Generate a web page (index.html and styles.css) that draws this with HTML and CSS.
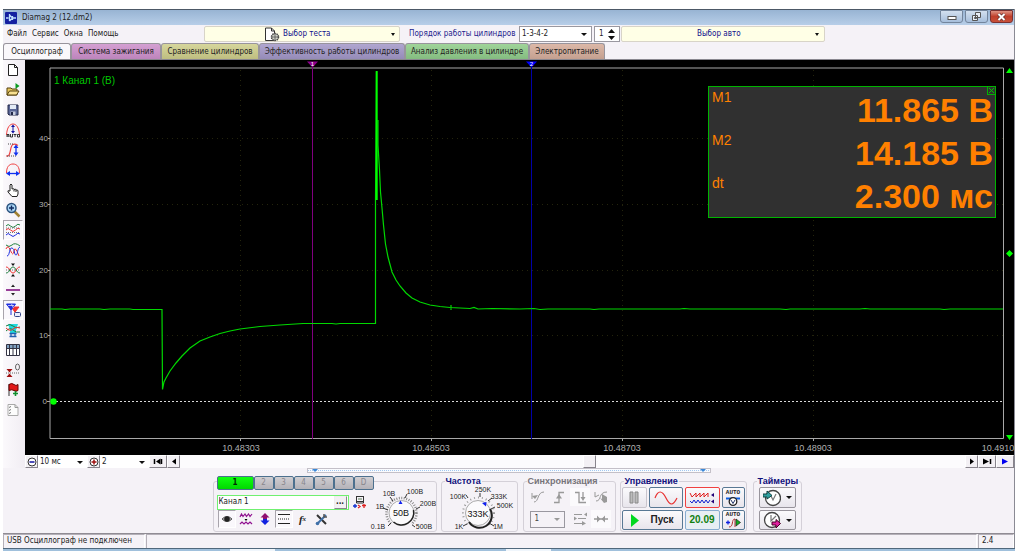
FILE: index.html
```
<!DOCTYPE html>
<html lang="ru">
<head>
<meta charset="utf-8">
<title>Diamag 2 (12.dm2)</title>
<link rel="stylesheet" href="styles.css">
</head>
<body>
<div class="window">
  <header class="titlebar">
    <svg class="app-logo" width="12" height="12" viewBox="0 0 12 12"><rect width="12" height="12" rx="1" fill="#1420a0"/><path d="M1 6h2.500M4.500 2v7M4.500 3l3 3-3 3M7.500 4v4M7.500 6H11" fill="none" stroke="#bfe0ff" stroke-width="1.300"/></svg>
    <h1>Diamag 2 (12.dm2)</h1>
    <div class="win-buttons">
      <button class="win-btn" aria-label="Свернуть"><svg width="10" height="8"><rect x="1" y="3.500" width="8" height="3" fill="#fff" stroke="#555"/></svg></button>
      <button class="win-btn" aria-label="Восстановить"><svg width="10" height="9"><path d="M3.500 .500h5v5h-5zM.500 3.500h5v5h-5z" fill="#e8eef6" stroke="#555"/><path d="M2.500 5.500h2v1h-2z" fill="none" stroke="#555"/></svg></button>
      <button class="win-btn close" aria-label="Закрыть"><svg width="9" height="8"><path d="M1.500 1l6 6M7.500 1l-6 6" stroke="#5a2a2a" stroke-width="3.400"/><path d="M1.500 1l6 6M7.500 1l-6 6" stroke="#fff" stroke-width="2"/></svg></button>
    </div>
  </header>

  <div class="menubar">
    <nav class="menu"><button>Файл</button><button>Сервис</button><button>Окна</button><button>Помощь</button></nav>
    <button class="chooser test">
      <svg width="16" height="15" viewBox="0 0 16 15"><path d="M1.500 1h6l3 3v9.500h-9z" fill="#fff" stroke="#333"/><path d="M7.500 1v3h3" fill="none" stroke="#333"/><circle cx="11" cy="10" r="3.500" fill="#cfd3c8" stroke="#444" stroke-width="1.500" stroke-dasharray="1.500 .700"/><path d="M7.500 10h7M11 6.500v7" stroke="#555" stroke-width=".800"/></svg>
      <span>Выбор теста</span><i class="caret"></i>
    </button>
    <label class="order-label" for="order">Порядок работы цилиндров</label>
    <span class="drop order"><select id="order"><option>1-3-4-2</option></select></span>
    <span class="spin"><input aria-label="Цилиндр" value="1"><svg width="7" height="11"><path d="M3.500 0L7 4H0zM3.500 11L0 7h7z" fill="#111"/></svg></span>
    <button class="chooser auto"><span>Выбор авто</span><i class="caret"></i></button>
  </div>

  <div class="tabs" role="tablist">
    <button role="tab" aria-selected="true" class="tab active">Осциллограф</button>
    <button role="tab" class="tab pink">Система зажигания</button>
    <button role="tab" class="tab olive">Сравнение цилиндров</button>
    <button role="tab" class="tab violet">Эффективность работы цилиндров</button>
    <button role="tab" class="tab green">Анализ давления в цилиндре</button>
    <button role="tab" class="tab peach">Электропитание</button>
  </div>

  <main class="work">
    <aside class="tools">
      <button aria-label="Новый"><svg viewBox="0 0 16 16"><path d="M3.500 2.500h6l3 3v8h-9z" fill="#fff" stroke="#222"/><path d="M9.500 2.500v3h3" fill="none" stroke="#222"/></svg></button>
      <button aria-label="Открыть"><svg viewBox="0 0 16 16"><path d="M2 6h4l1 1h5v6H2z" fill="#e8c860" stroke="#55400c"/><path d="M2 13l2.500-4H14l-2.500 4z" fill="#f8e090" stroke="#55400c"/><path d="M10.500 1l4 3-4 3z" fill="#0a9a20"/></svg></button>
      <button aria-label="Сохранить"><svg viewBox="0 0 16 16"><path d="M3 3h10v10H4l-1-1z" fill="#5a6696" stroke="#222848"/><path d="M5 3h6v4H5z" fill="#e4ebf6"/><path d="M5.500 9.500h5V13h-5z" fill="#c8cede"/><path d="M6 10h2v3H6z" fill="#222848"/></svg></button>
      <button aria-label="Авто масштаб"><svg viewBox="0 0 16 16"><path d="M1.500 13C2 5 5 2 8 2s6 3 6.500 11" fill="none" stroke="#f04040"/><path d="M8 4v6" stroke="#1010a0"/><path d="M8 2.500l2 2.500H6zM8 11.500L6 9h4z" fill="#1010a0"/><path d="M2 15v-2.500h2V15M2 14h2M5.500 12v3h2v-3M8.500 12.500h3M10 12.500V15M12.500 12.500h2V15h-2z" fill="none" stroke="#222" stroke-width=".900"/></svg></button>
      <button aria-label="Амплитуда"><svg viewBox="0 0 16 16"><path d="M1 14h2C6 13 5 3 8 2.500q2-1 5 1" fill="none" stroke="#f04040" stroke-width="1.200"/><path d="M3 2h5M2 14h9" stroke="#444" stroke-dasharray="1 1"/><path d="M11 4v8" stroke="#1030f0" stroke-width="1.300"/><path d="M11 2.500l2.500 3.500h-5zM11 14l-2.500-3.500h5z" fill="#1030f0"/></svg></button>
      <button aria-label="Длительность"><svg viewBox="0 0 16 16"><path d="M1.500 11C1.500 5 4 2 8 2s6.500 3 6.500 9" fill="none" stroke="#f04040"/><path d="M3 11.500h10" stroke="#1030f0" stroke-width="1.300"/><path d="M1 11.500L5 9v5zM15 11.500L11 9v5z" fill="#1030f0"/></svg></button>
      <button aria-label="Рука"><svg viewBox="0 0 16 16"><path d="M5 9V3q1-2 2 0v4q2-1 2 .500 2-1 2 .500 2-.500 2 1v3l-1 2.500H7L3 10q-1-2 2-1z" fill="#fff" stroke="#222"/><path d="M9 7.500v2M11 8v2" stroke="#222"/></svg></button>
      <button aria-label="Масштаб"><svg viewBox="0 0 16 16"><path d="M9.500 9.500l5 5" stroke="#a08030" stroke-width="2.500"/><circle cx="6.500" cy="6" r="4.500" fill="#a8d4f4" stroke="#28507c" stroke-width="1.500"/><path d="M4 6h5M6.500 3.500v5" stroke="#112a60" stroke-width="1.400"/></svg></button>
      <button class="pressed" aria-label="Раздельно"><svg viewBox="0 0 16 16"><g fill="none"><path d="M1 4q2-3 4.500 0t5 0 4.500-1" stroke="#208040"/><path d="M1 8q2-3 4.500 0t5 0 4.500-1" stroke="#f03030"/><path d="M1 13q2-3 4.500 0t5 0 4.500-1" stroke="#2030e0"/><path d="M1 6h14M1 10.500h14" stroke="#777" stroke-dasharray="1 1"/></g></svg></button>
      <button aria-label="Совместно"><svg viewBox="0 0 16 16"><g fill="none"><path d="M1 3q3 3 6 0t8 1" stroke="#208040"/><path d="M1 7q2-5 4.500 1.500T9 9t5 5" stroke="#f03030"/><path d="M2 14c3 0 2-9 5-8s2 7 4 7 1-7 4-8" stroke="#2030e0"/></g></svg></button>
      <button aria-label="Центр"><svg viewBox="0 0 16 16"><path d="M1 8h14" stroke="#777" stroke-dasharray="1 1"/><path d="M1 5c4 0 4 6 7 6s3-6 7-6" fill="none" stroke="#f03030"/><path d="M1 11c4 0 4-6 7-6s3 6 7 6" fill="none" stroke="#208040"/><path d="M8 4L6 1.500h4zM8 12l2 2.500H6z" fill="#111"/></svg></button>
      <button aria-label="Разделитель"><svg viewBox="0 0 16 16"><path d="M1 8h14" stroke="#801080" stroke-width="1.600"/><path d="M8 2.500L10 5H6zM8 13.500L6 11h4z" fill="#222"/></svg></button>
      <button class="pressed" aria-label="Линейки"><svg viewBox="0 0 16 16"><path d="M6 5h8l-4 5zM10 5v8" fill="#f03030" stroke="#f03030"/><path d="M1.500 2h9L6 8zM6 2v11" fill="#2030e0" stroke="#2030e0"/><path d="M3 3.500h6M6.500 2l2 4" stroke="#dde" stroke-width=".800"/><rect x="9.500" y="10.500" width="6" height="4" rx="1" fill="#e8ecff" stroke="#334488"/></svg></button>
      <button aria-label="Фильтр"><svg viewBox="0 0 16 16"><path d="M3 2h10l-2 6v3H5V8z" fill="#20d8e0"/><path d="M4.500 11.500h7M4.500 14.500h7M6 11v3M10 11v3" stroke="#2060b0" stroke-width="1.300"/><path d="M1 4q4-3 7 0t7 1M1 9q4-4 7-1t7 2" fill="none" stroke="#208040"/><path d="M1 6q4 4 7 1t7-1" fill="none" stroke="#f03030"/></svg></button>
      <button aria-label="Таблица"><svg viewBox="0 0 16 16"><path d="M1.500 2.500h13v11h-13z" fill="#fff" stroke="#334"/><path d="M2 3h12v3H2z" fill="#80a0c0"/><path d="M2 6.500h12M4.500 3v10M8 3v10M11.500 3v10" stroke="#334"/></svg></button>
      <button aria-label="Ноль"><svg viewBox="0 0 16 16"><path d="M1 11h14" stroke="#666" stroke-dasharray="1 1"/><path d="M4.500 10.500L1.500 7h6zM4.500 11.500l3 3.500h-6z" fill="#a01010"/><ellipse cx="12.500" cy="5" rx="2" ry="3" fill="none" stroke="#666"/></svg></button>
      <button aria-label="Метка"><svg viewBox="0 0 16 16"><path d="M4 2v12" stroke="#333"/><path d="M4 2.500q3-2 5 0t4 0v6q-2 1.500-4 0t-5 0z" fill="#e01818" stroke="#600"/><path d="M10.500 9v5M8 11.500h5" stroke="#109030" stroke-width="1.600"/></svg></button>
      <button aria-label="Отчёт"><svg viewBox="0 0 16 16"><path d="M3 2.500h7l3 3v8H3z" fill="#fcfcfc" stroke="#aaa"/><path d="M10 2.500v3h3" fill="none" stroke="#999"/><path d="M4 5.500l2-1M4 8.500l2-1M4 11.500l2-1" stroke="#777"/></svg></button>
    </aside>

    <section class="scope">
      <div class="plot">
        <svg class="graph" viewBox="25 60 989 395" role="img" aria-label="Осциллограмма, канал 1">
          <g class="grid-lines">
            <path d="M52 138.500H1003M52 204.500H1003M52 270.500H1003M52 335.500H1003M240.500 70V438M431.500 70V438M622.500 70V438M813.500 70V438"/>
          </g>
          <path class="zero" d="M52 401.500H1003"/>
          <path class="frame" d="M50 68H1003.500V438.500H50z"/>
          <path class="frame" d="M48 138.500h2M48 204.500h2M48 270.500h2M48 335.500h2M47 401.500h3M240.500 439v2M431.500 439v2M622.500 439v2M813.500 439v2"/>
          <g class="y-labels"><text x="48" y="141">40</text><text x="48" y="207">30</text><text x="48" y="273">20</text><text x="48" y="338">10</text><text x="47" y="404">0</text></g>
          <g class="x-labels"><text x="241" y="451">10.48303</text><text x="431" y="451">10.48503</text><text x="622" y="451">10.48703</text><text x="813" y="451">10.48903</text><text x="998" y="451">10.4910</text></g>
          <path d="M312.500 64V439" stroke="#80007f"/><path d="M307 61.500h11l-5.500 6z" fill="#90008f"/>
          <path d="M531.500 64V439" stroke="#0000a8"/><path d="M526 61.500h11l-5.500 6z" fill="#0000ff"/>
          <g class="marks"><text x="312.500" y="66">1</text><text x="531.500" y="66">2</text></g>
          <path class="trace" d="M50 309h12l3 .500 5-.500h30l4 .500 6-.500h20l3 .500h29L162.500 389.500L164 382L166 378L170 371L176 363L182 356L190 348L200 341L210 337L220 333.500L230 331L240 329L260 326.500L280 325L303 323.500H332L336 324L340 323.500H375.500V200L376.500 72"/>
          <path class="trace" d="M378 120V145L379.500 170L380.500 192L382 208L383.500 225L385.500 244L388 257L392 272L396 280L400 286L406 293L412 298L420 302L430 305L440 306.500L450 307.500L470 308.500L474 307.500L478 309L492 308.500L520 309L534 308.500L540 309.500L548 309H590L594 309.500L599 309H680L684 308.500L690 309H780L786 309.500L790 309H860L865 308.500L870 309H940L944 309.500L950 309H1003M451 305v5"/>
          <path d="M376.700 71V200" stroke="#00ff00" stroke-width="2"/>
          <text class="channel" x="54" y="84">1 Канал 1 (В)</text>
          <circle cx="53.500" cy="401.500" r="3.200" fill="#00ff00"/>
          <path d="M1009.500 68l3.500 5h-7zM1009.500 440l-3.500-5h7zM1009.500 250l3.500 3.500-3.500 3.500-3.500-3.500z" fill="#00ff00"/>
        </svg>
        <div class="readout">
          <button class="readout-close" aria-label="Закрыть"><svg width="7" height="7"><path d="M1 1l5 5M6 1L1 6" stroke="#00c800"/></svg></button>
          <div class="reading"><span>M1</span><output>11.865 В</output></div>
          <div class="reading"><span>M2</span><output>14.185 В</output></div>
          <div class="reading"><span>dt</span><output>2.300 мс</output></div>
        </div>
      </div>
      <div class="timebar">
        <button class="tb" aria-label="Уменьшить"><svg width="10" height="10"><circle cx="5" cy="5" r="4" fill="#fff" stroke="#333"/><path d="M2.500 5h5" stroke="#1010a0" stroke-width="1.500"/></svg></button>
        <span class="drop flat"><select aria-label="Развертка"><option>10 мс</option></select></span>
        <button class="tb" aria-label="Увеличить"><svg width="10" height="10"><circle cx="5" cy="5" r="4" fill="#fff" stroke="#333"/><path d="M2.500 5h5M5 2.500v5" stroke="#a01010" stroke-width="1.500"/></svg></button>
        <span class="drop flat"><select aria-label="Масштаб"><option>2</option></select></span>
        <button class="tb wide" aria-label="В начало"><svg width="10" height="7"><path d="M1.500 1v5M8.500 1v5" stroke="#000" stroke-width="1.500"/><path d="M7.500 .500v6L3 3.500z"/></svg></button>
        <button class="tb" aria-label="Назад"><svg width="6" height="7"><path d="M5 .500v6L1 3.500z"/></svg></button>
        <div class="scroll"><button class="thumb" aria-label="Ползунок"></button></div>
        <button class="tb" aria-label="Вперед"><svg width="6" height="7"><path d="M1 .500v6L5 3.500z"/></svg></button>
        <button class="tb wide" aria-label="В конец"><svg width="10" height="7"><path d="M1 .500v6l6-3z"/><path d="M8.500 1v5" stroke="#000" stroke-width="1.500"/></svg></button>
        <button class="tb wide" aria-label="Воспроизвести"><svg width="8" height="7"><path d="M1 .500v6l6-3z" fill="#0000f0"/></svg></button>
      </div>
    </section>
  </main>

  <div class="splitter"><i></i><i></i></div>

  <footer class="panels">
    <fieldset class="group channels">
      <div class="channel-tabs"><button class="on">1</button><button>2</button><button>3</button><button>4</button><button>5</button><button>6</button><button>D</button></div>
      <div class="channel-body">
        <div class="channel-edit">
          <div class="name-row">
            <span class="name"><input aria-label="Имя канала" value="Канал 1"><button aria-label="Выбрать">...</button></span>
            <button class="plain" aria-label="Щуп"><svg width="14" height="14" viewBox="0 0 14 14"><path d="M3.500 1v7h7V1M3 1.500h8M4 6.500h6" fill="none" stroke="#333"/><path d="M5 3h4v2H5z" fill="#a8b8a8"/><path d="M2 9v4M0 11h4" stroke="#1030d0" stroke-width="1.300"/><path d="M5 10l2 1.500L5 13M9 10.500h4M11 9v4" fill="none" stroke="#e02020" stroke-width="1.300"/></svg></button>
          </div>
          <div class="icon-row">
            <button class="plain pressed" aria-label="Видимость"><svg width="14" height="10"><path d="M2 5q5-5 10 0-5 5-10 0z" fill="#bbb" stroke="#555"/><circle cx="7" cy="5" r="2.800" fill="#222"/></svg></button>
            <button class="plain" aria-label="Форма"><svg width="14" height="14"><path d="M1 5l1.500-3L4 4.500 6 2l1.500 2.500 2-2.500L11 4.500 13 2M1 12l2-2 2 2 2-2 2 2 2-2 2 2" fill="none" stroke="#901090" stroke-width="1.200"/><path d="M7 9L5.500 7h3z"/></svg></button>
            <button class="plain" aria-label="Инверсия"><svg width="12" height="14"><path d="M6 1l4.500 4.500h-9zM4 5h4v2H4z" fill="#901070"/><path d="M6 13L1.500 8.500h9zM4 7h4v2H4z" fill="#1020e0"/></svg></button>
            <button class="plain pressed" aria-label="Уровни"><svg width="14" height="12"><path d="M1 1.500h12M1 10.500h12" stroke="#222"/><path d="M1 6h12" stroke="#222" stroke-dasharray="1 1"/></svg></button>
            <button class="plain fx" aria-label="Функция">f<sub>x</sub></button>
            <button class="plain" aria-label="Настройка"><svg width="13" height="13"><path d="M2 2l9 9" stroke="#333" stroke-width="2"/><path d="M11 2L3 10" stroke="#4070a8" stroke-width="2"/><circle cx="2.500" cy="10.500" r="1.800" fill="#4070a8"/><path d="M9 1v3h3" fill="none" stroke="#555" stroke-width="1.500"/></svg></button>
          </div>
        </div>
        <svg class="dial" width="68" height="50" viewBox="369 484 68 50">
          <circle cx="401.500" cy="513" r="15" fill="none" stroke="#888" stroke-width="2.500" stroke-dasharray="1 1.500"/>
          <path d="M391 523l-3 3M388 510l-5-2M393 501l-3-4M405 498l2-4M416 509l4-2M411 524l4 3" stroke="#333"/>
          <path d="M391 524L401.500 513 412 524V530H391z" fill="#f5f2f7"/>
          <circle cx="401.500" cy="513" r="12.500" fill="#fbfafc" stroke="#aaa"/>
          <path d="M413.500 510a12.300 12.300 0 0 1-20 12" fill="none" stroke="#222" stroke-width="1.500"/>
          <path d="M400.500 500.500l2 3.500h-4z" fill="#1020f0"/>
          <text class="value" x="401" y="516">50В</text>
          <g class="scale"><text x="389" y="496">10В</text><text x="415" y="494">100В</text><text x="380" y="509">1В</text><text x="428" y="506">200В</text><text x="378" y="529">0.1В</text><text x="424" y="529">500В</text></g>
        </svg>
      </div>
    </fieldset>

    <fieldset class="group freq">
      <legend>Частота</legend>
      <svg class="dial" width="72" height="47" viewBox="443 484 72 47">
        <circle cx="478.500" cy="513" r="15.500" fill="none" stroke="#999" stroke-width="2" stroke-dasharray="1 3"/>
        <path d="M468 498l-2-3M480 497v-4M488 501l4-3M491 509l4-2M467 524l-4 2M489 523l5 3" stroke="#333"/>
        <path d="M468 524L478.500 513 489 524V530H468z" fill="#f5f2f7"/>
        <circle cx="478" cy="513" r="12.500" fill="#fbfafc" stroke="#aaa"/>
        <path d="M490 509a12.300 12.300 0 0 1-21 13" fill="none" stroke="#222" stroke-width="2"/>
        <path d="M482 503l4.500-1-.500 4.500z" fill="#1020f0"/>
        <text class="value" x="478" y="517">333K</text>
        <g class="scale"><text x="483" y="492">250K</text><text x="458" y="499">100K</text><text x="499" y="499">333K</text><text x="505" y="508">500K</text><text x="459" y="529">1K</text><text x="498" y="529">1M</text></g>
      </svg>
    </fieldset>

    <fieldset class="group sync" disabled>
      <legend>Синхронизация</legend>
      <div class="sync-grid">
        <button class="plain" aria-label="Сигнал"><svg width="14" height="14"><path d="M1 3v6M3 12c5 0 3-10 10-10" fill="none" stroke="#999"/><path d="M1 6l6-1-3 4z" fill="#999"/></svg></button>
        <button class="plain" aria-label="Фронт"><svg width="14" height="14"><path d="M2 12.500h5v-10h5" fill="none" stroke="#999" stroke-width="1.300"/><path d="M4 8.500L7 4l3 4.500z" fill="#999"/></svg></button>
        <button class="plain lit" aria-label="Спад"><svg width="14" height="14"><path d="M2 2.500h4v10h7M10 2v7" fill="none" stroke="#999" stroke-width="1.300"/><path d="M7.500 7h5L10 11z" fill="#999"/></svg></button>
        <button class="plain" aria-label="Ручной"><svg width="14" height="14"><path d="M1 2v5l4-2M2 11c6 0 2-9 11-9" fill="none" stroke="#999"/><path d="M8 4l5 3v5l-3 1-4-5 2 1z" fill="#999"/></svg></button>
        <span class="drop sync-source"><select aria-label="Источник"><option>1</option></select></span>
        <button class="plain" aria-label="Уровень"><svg width="14" height="14"><path d="M1 2.500h8M5 6.500h8M1 11.500h11" stroke="#999"/><path d="M11 2.500l3-2v4zM4 6.500l-3-2v4zM9 9l4 2.500-4 2z" fill="#999"/></svg></button>
        <button class="plain lit" aria-label="Сжать"><svg width="14" height="8"><path d="M0 4h14" stroke="#999" stroke-width="1.500"/><path d="M6.500 4L3 .500v7zM7.500 4L11 .500v7z" fill="#999"/></svg></button>
      </div>
    </fieldset>

    <fieldset class="group control">
      <legend>Управление</legend>
      <div class="control-grid">
        <button class="push off" aria-label="Пауза"><svg width="10" height="13"><path d="M1 1h3v11H1zM6 1h3v11H6z" fill="#bbb" stroke="#888"/></svg></button>
        <button class="push" aria-label="Один кадр"><svg width="24" height="14"><path d="M1 7C4-1 8-1 12 7s7 8 11 0" fill="none" stroke="#e83030" stroke-width="1.200"/></svg></button>
        <button class="push red" aria-label="Непрерывно"><svg width="26" height="14"><path d="M1 2l2 4 4-4v4l4-4v4l4-4v4l4-4v4" fill="none" stroke="#e02020"/><path d="M1 10l2 2 2-3 2 3 2-3 2 3 2-3 2 3 2-3 2 3 2-3" fill="none" stroke="#1020d0"/><path d="M22 4l3-2v4zM22 10.500l3-2v4z" fill="#207"/></svg></button>
        <button class="push stack" aria-label="Авто измерение"><b>AUTO</b><svg width="16" height="10"><path d="M1 2.500h14" stroke="#1060e0" stroke-width="2"/><circle cx="8" cy="5.500" r="3.800" fill="#fff" stroke="#222" stroke-width="1.300"/><path d="M6 4l2 3.500L10 4" fill="none" stroke="#236"/></svg></button>
        <button class="push start"><svg width="9" height="13"><path d="M1 0l8 6.500L1 13z" fill="#00d820"/></svg><span>Пуск</span></button>
        <button class="push rate">20.09</button>
        <button class="push stack" aria-label="Авто пуск"><b>AUTO</b><svg width="16" height="10"><path d="M1 4.500h4M3 2.500v4" stroke="#1020e0" stroke-width="1.300"/><path d="M4 9c5 0 2-8 6-8v8" fill="none" stroke="#b03030"/><path d="M11 1l4.500 3.500L11 8z" fill="#10b020" stroke="#222" stroke-width=".700"/></svg></button>
      </div>
    </fieldset>

    <fieldset class="group timers">
      <legend>Таймеры</legend>
      <div class="timer-list">
        <button class="push" aria-label="Таймер пуска"><svg width="18" height="18"><circle cx="10" cy="9" r="7.500" fill="#fff" stroke="#444" stroke-width="1.300"/><path d="M8 7l2 4 3-6" fill="none" stroke="#777" stroke-width="1.200"/><path d="M0 5h4V2l5 4.500L4 10V8H0z" fill="#30a0a0" stroke="#144"/></svg><i class="caret"></i></button>
        <button class="push" aria-label="Таймер останова"><svg width="18" height="18"><circle cx="9" cy="9" r="7.500" fill="#fff" stroke="#444" stroke-width="1.300"/><path d="M8 4v6l5-5" fill="none" stroke="#777" stroke-width="1.200"/><path d="M9 11h4V8.500l4.500 4L13 17v-3H9z" fill="#e020a0" stroke="#402"/></svg><i class="caret"></i></button>
      </div>
    </fieldset>
  </footer>

  <div class="status"><span>USB Осциллограф не подключен</span><span></span><span>2.4</span></div>
</div>
<div class="taskbar"><i></i><i></i></div>
</body>
</html>
```
FILE: styles.css
```
* { box-sizing: border-box; }
body {
  margin: 0;
  min-height: 100vh;
  padding: 9px 9px 0 3px;
  display: flex;
  flex-direction: column;
  background: #fff;
  color: #222;
  font-family: "DejaVu Sans Condensed", "Liberation Sans", sans-serif;
  font-size: 8px;
  line-height: 12px;
}
button, select, input {
  margin: 0;
  padding: 0;
  border: 0;
  border-radius: 0;
  font: inherit;
  color: inherit;
  background: none;
  appearance: none;
}
svg { display: block; flex: none; }
.window {
  flex: 1;
  display: flex;
  flex-direction: column;
  background: #f5f2f7;
  border-right: 1px solid #8a8a94;
}

.titlebar {
  display: flex;
  align-items: center;
  height: 16px;
  padding-left: 2px;
  border-top: 1px solid #4c5866;
  background: linear-gradient(#98b4d3, #b7cee8);
}
.titlebar h1 { flex: 1; margin: 0 0 0 5px; font-size: 8px; font-weight: normal; line-height: 14px; }
.win-buttons { display: flex; gap: 2px; align-self: flex-start; padding-right: 1px; }
.win-btn {
  width: 23px;
  height: 13px;
  display: flex;
  align-items: center;
  justify-content: center;
  border: 1px solid #73859c;
  border-radius: 1px 1px 3px 3px;
  background: linear-gradient(#d3e0ef, #a6bedb);
}
.win-btn.close { background: linear-gradient(#de9384, #c03f2b 50%, #c8503a); border-color: #7a3030; }

.menubar { display: flex; align-items: center; height: 18px; }
.menu { display: flex; gap: 5px; width: 201px; padding-left: 4px; }
.chooser {
  display: flex;
  align-items: center;
  justify-content: center;
  gap: 3px;
  height: 16px;
  padding-right: 4px;
  border: 1px solid #d8d4c8;
  border-radius: 2px;
  background: #ffffe6;
  color: #10108c;
}
.chooser::before { content: ""; flex: 1; }
.chooser > .caret { flex: 1; }
.test { width: 196px; }
.auto { width: 204px; padding-right: 5px; }
.auto::before { flex: 0 0 72px; }
.test::before { flex: 0 0 56px; }
.caret { display: flex; justify-content: flex-end; }
.caret::after {
  content: "";
  border: 2px solid transparent;
  border-top: 3px solid #111;
  border-bottom: 0;
}
.order-label { padding-left: 9px; width: 119px; color: #1c1c8c; white-space: nowrap; }
.drop { position: relative; display: block; background: #fff; border: 1px solid #9a98a0; }
.drop select { display: block; width: 100%; height: 100%; padding-left: 2px; }
.drop::after {
  content: "";
  position: absolute;
  right: 4px;
  top: 50%;
  margin-top: -1px;
  border: 3px solid transparent;
  border-top: 3px solid #111;
  border-bottom: 0;
  pointer-events: none;
}
.order { width: 73px; height: 16px; }
.spin {
  display: flex;
  align-items: center;
  width: 26px;
  height: 16px;
  margin: 0 1px 0 2px;
  padding: 0 4px;
  border: 1px solid #9a98a0;
  background: #fff;
}
.spin input { width: 100%; min-width: 0; }

.tabs {
  display: grid;
  grid-template-columns: 68px 90px 98px 146px 124px 76px;
  height: 17px;
  border-bottom: 1px solid #8a8890;
}
.tab {
  border: 1px solid #98949c;
  border-bottom: 0;
  border-radius: 3px 3px 0 0;
  white-space: nowrap;
}
.tab.active { background: #faf8fb; }
.pink { background: linear-gradient(#d4a0d2, #bd84bc); }
.olive { background: linear-gradient(#d6d69c, #bebe80); }
.violet { background: linear-gradient(#b0a6d0, #958bb8); }
.green { background: linear-gradient(#a0d49a, #84bc80); }
.peach { background: linear-gradient(#dcb8a8, #c4a090); }

.work { flex: 1; display: grid; grid-template-columns: 22px 1fr; }
.tools { display: flex; flex-direction: column; padding-right: 2px; background: linear-gradient(90deg, #fbf9fc, #f1edf3); }
.tools button { height: 20px; display: flex; align-items: center; justify-content: center; }
.tools button svg { width: 16px; height: 16px; }
.pressed { border: 1px solid #a8a4ac; border-right-color: #fff; border-bottom-color: #fff; background: #faf8fc; }
.scope { display: flex; flex-direction: column; min-width: 0; }
.plot { position: relative; flex: 1; background: #000; font-family: "Liberation Sans", Arial, sans-serif; }
.graph { width: 100%; }
.grid-lines { stroke: #24240c; stroke-dasharray: 1 4; fill: none; }
.zero { stroke: #d8d8d8; stroke-dasharray: 2 2; }
.frame { fill: none; stroke: #a8a8a8; }
.trace { fill: none; stroke: #00d800; stroke-width: 1.2px; }
.y-labels { fill: #b0b0b0; font-size: 8px; text-anchor: end; }
.x-labels { fill: #b0b0b0; font-size: 9px; text-anchor: middle; }
.marks { fill: #fff; font-size: 6px; text-anchor: middle; }
.channel { fill: #00c800; font-size: 10px; }
.readout {
  position: absolute;
  top: 26px;
  right: 18px;
  width: 288px;
  padding: 1px 2px 0 3px;
  border: 1px solid #00b400;
  background: #303030;
  color: #ff8000;
}
.readout-close { position: absolute; top: 0; right: 0; border: 1px solid #00b400; border-width: 0 0 1px 1px; }
.reading { display: flex; justify-content: space-between; height: 43px; font-size: 14px; line-height: 18px; }
.reading output { font-size: 34px; font-weight: bold; line-height: 44px; }

.timebar { display: flex; height: 13px; background: #fff; }
.tb {
  display: flex;
  align-items: center;
  justify-content: center;
  width: 13px;
  border: 1px solid #fff;
  border-right-color: #88848c;
  border-bottom-color: #88848c;
  background: #f3f0f4;
}
.tb.wide { width: 18px; }
.flat { width: 49px; border: 0; }
.scroll { flex: 1; padding-left: 403px; background: #fcfbfd; }
.thumb { display: block; width: 13px; height: 13px; border: 1px solid #fff; border-right-color: #88848c; border-bottom-color: #88848c; background: #f3f0f4; }

.splitter {
  display: flex;
  align-items: center;
  justify-content: space-between;
  align-self: center;
  width: 404px;
  height: 5px;
  padding: 0 4px;
  border: 1px solid #c4c0c8;
  background: repeating-linear-gradient(90deg, #a4c8f0 0 1px, #f8fbff 1px 2px) center / 100% 1px no-repeat #fafbfe;
}
.splitter i { border: 3px solid transparent; border-top: 3px solid #3c88d8; border-bottom: 0; }

.panels {
  display: flex;
  justify-content: center;
  gap: 4px;
  height: 61px;
  padding: 3px 3px 1px 0;
  border-bottom: 1px solid #908c94;
}
.group {
  position: relative;
  margin: 0;
  padding: 11px 2px 0;
  min-width: 0;
  border: 0;
}
.group::before {
  content: "";
  position: absolute;
  inset: 5px 0 0;
  border: 1px solid #d4d0d8;
  border-radius: 3px;
  pointer-events: none;
}
.group legend {
  position: absolute;
  top: 0;
  left: 4px;
  padding: 0 1px;
  background: #f5f2f7;
  color: #10107c;
  font-family: "Liberation Sans", Arial, sans-serif;
  font-size: 9px;
  font-weight: bold;
  line-height: 11px;
}
.channels { width: 224px; padding: 0 0 0 4px; }
.freq { width: 77px; padding-top: 8px; }
.sync { width: 93px; margin-left: 1px; }
.sync legend { color: #77747a; }
.control { width: 127px; }
.timers { width: 49px; margin-left: 2px; padding-left: 6px; }
.channel-tabs { position: relative; display: flex; height: 14px; }
.channel-tabs button {
  width: 20px;
  border: 1px solid #4c708e;
  border-radius: 2px;
  background: linear-gradient(#d0ced2, #b4b2b8);
  color: #88868c;
}
.channel-tabs .on { width: 37px; background: linear-gradient(#10ff10, #00d800); color: #003000; font-weight: bold; }
.channel-body { display: flex; margin-top: -6px; }
.channel-edit { width: 152px; padding-top: 10px; }
.name-row { display: flex; gap: 4px; align-items: center; height: 16px; }
.name { display: flex; width: 132px; height: 15px; border: 1px solid #70f070; background: #fff; padding: 0 1px; }
.name input { flex: 1; min-width: 0; }
.name button { width: 13px; border: 1px solid #eee; border-right-color: #88848c; border-bottom-color: #88848c; background: #f3f0f4; font-weight: bold; line-height: 6px; }
.icon-row { display: flex; gap: 1px; padding-left: 1px; height: 18px; }
.plain { display: flex; align-items: center; justify-content: center; }
.icon-row .plain { width: 18px; height: 18px; }
.icon-row .fx { font: italic bold 11px "Liberation Serif", serif; }
.fx sub { font-size: 7px; }
.dial { font-family: "Liberation Sans", Arial, sans-serif; }
.dial .scale { font-size: 7px; text-anchor: middle; fill: #222; }
.dial .value { font-size: 9px; text-anchor: middle; fill: #111; }
.sync-grid {
  display: grid;
  grid-template-columns: repeat(4, 20px);
  grid-template-rows: 20px 18px;
  gap: 3px 1px;
  padding-left: 3px;
  align-items: center;
}
.sync-grid .plain { height: 18px; }
.lit { background: #fbfafc; }
.sync-source { grid-column: span 2; width: 35px; height: 17px; margin-left: 2px; background: #f5f2f7; }
.sync-source select { padding-left: 4px; color: #444; opacity: 1; }
.sync-source::after { border-top-color: #999; }
.control-grid { display: grid; grid-template-columns: 25px 34px 35px 23px; grid-template-rows: 21px 20px; gap: 2px; }
.push {
  display: flex;
  align-items: center;
  justify-content: center;
  border: 1px solid #587894;
  border-radius: 2px;
  background: linear-gradient(#fbfafc, #e8e5ec);
  font-family: "Liberation Sans", Arial, sans-serif;
}
.off { border-color: #c8c4cc; }
.red { border-color: #f04040; }
.stack { flex-direction: column; }
.stack b { font: bold 6px "Liberation Mono", monospace; line-height: 6px; }
.start { grid-column: span 2; justify-content: flex-start; padding-left: 7px; gap: 12px; font-size: 10px; font-weight: bold; }
.rate { font-size: 10px; font-weight: bold; color: #108010; background: #e8eef4; border-color: #88acd0; }
.timer-list { display: grid; grid-template-rows: 21px 20px; gap: 2px; width: 37px; }
.timer-list .push { gap: 5px; border-color: #98949c; }
.timer-list .caret::after { border-width: 3px 3px 0; }

.status { display: grid; grid-template-columns: 142px 1fr 36px; gap: 1px; height: 14px; }
.status span { padding-left: 3px; border: 1px solid #b4b0b8; border-right-color: #fff; border-bottom: 0; white-space: nowrap; }
.taskbar { height: 3px; display: flex; gap: 231px; padding-left: 227px; border-top: 1px solid #50687c; background: #a0c0dc; }
.taskbar i { width: 45px; background: #f0f6fc; }
```
